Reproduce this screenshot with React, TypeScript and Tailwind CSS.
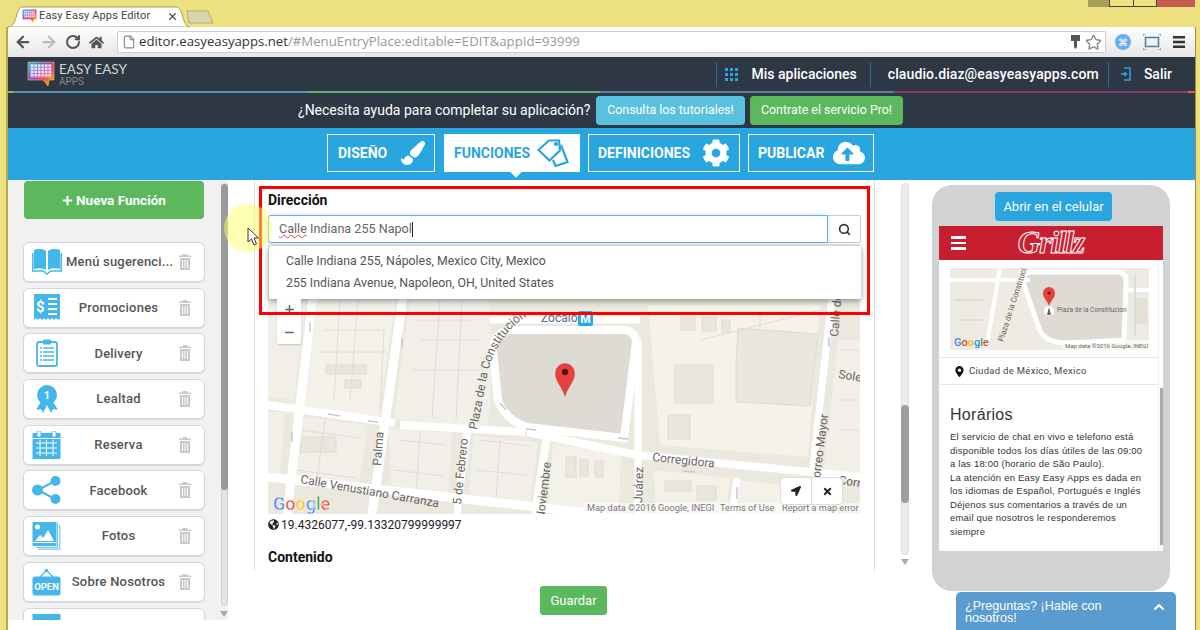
import { ArrowLeft, ArrowRight, RotateCw, File, Star, Search, X, ChevronUp, Plus, Minus } from "lucide-react";
import { FaHome, FaGlobeAmericas, FaMapMarkerAlt, FaCog, FaCloudUploadAlt, FaPaintBrush, FaLocationArrow, FaTimes, FaPlus } from "react-icons/fa";

const BLUE = "#45b6ea";

function BookIcon() {
  return (
    <svg width="30" height="28" viewBox="0 0 30 28">
      <path d="M2 2c4-1.500 9-1.500 12 1v19c-3-2-8-2-12-1z" fill={BLUE} />
      <path d="M16 3c3-2.500 8-2.500 12-1v19c-4-1-9-1-12 1z" fill={BLUE} />
      <path d="M0.800 5v18h10.500l3.700 3 3.700-3h10.500V5" fill="none" stroke={BLUE} strokeWidth="1.500" />
    </svg>
  );
}

function ReceiptIcon() {
  return (
    <svg width="28" height="27" viewBox="0 0 28 27">
      <path d="M1 0h26v24l-2 2-2-2-2 2-2-2-2 2-2-2-2 2-2-2-2 2-2-2-2 2-2-2-2 2z" fill={BLUE} />
      <path d="M15 5h9M15 10h9M15 15h9M15 20h9" stroke="#fff" strokeWidth="1.800" />
      <text x="3" y="18" fontFamily="Roboto, sans-serif" fontWeight="700" fontSize="15" fill="#fff">$</text>
    </svg>
  );
}

function ClipboardIcon() {
  return (
    <svg width="22" height="28" viewBox="0 0 22 28">
      <rect x="1" y="3" width="20" height="24" rx="2" fill="none" stroke={BLUE} strokeWidth="1.800" />
      <rect x="7" y="0.500" width="8" height="5" rx="1" fill={BLUE} />
      <path d="M4 9h14M4 13h14M4 17h14M4 21h14" stroke={BLUE} strokeWidth="1.500" strokeDasharray="2 1 11" />
    </svg>
  );
}

function MedalIcon() {
  return (
    <svg width="24" height="28" viewBox="0 0 24 28">
      <path d="M7 15L1 25l5-1 2 4 4-8 4 8 2-4 5 1-6-10z" fill={BLUE} />
      <circle cx="12" cy="10" r="10" fill={BLUE} />
      <text x="12" y="14" textAnchor="middle" fontFamily="Roboto, sans-serif" fontWeight="700" fontSize="11" fill="#fff">1</text>
    </svg>
  );
}

function CalendarIcon() {
  return (
    <svg width="29" height="28" viewBox="0 0 29 28">
      <rect x="0.500" y="2" width="28" height="26" rx="1" fill={BLUE} />
      <rect x="5" y="0" width="4" height="6" rx="1.500" fill="#fff" stroke={BLUE} />
      <rect x="20" y="0" width="4" height="6" rx="1.500" fill="#fff" stroke={BLUE} />
      <path d="M0.500 7.500h28M4 12h21M4 17h21M4 22h21M8 9v16M14.500 9v16M21 9v16" stroke="#fff" strokeWidth="1" />
    </svg>
  );
}

function ShareIcon() {
  return (
    <svg width="29" height="28" viewBox="0 0 29 28">
      <path d="M6 14L23 5M6 14l17 9" stroke={BLUE} strokeWidth="2" />
      <circle cx="5.500" cy="14" r="5.500" fill={BLUE} />
      <circle cx="23.500" cy="5" r="5" fill={BLUE} />
      <circle cx="23.500" cy="23" r="5" fill={BLUE} />
    </svg>
  );
}

function PhotosIcon() {
  return (
    <svg width="29" height="28" viewBox="0 0 29 28">
      <path d="M27 3h1.500v25H6v-1.500h21z" fill={BLUE} opacity=".6" />
      <path d="M25 1h1v25H4v-1h21z" fill={BLUE} opacity=".8" />
      <rect x="0.500" y="0" width="24" height="24" fill={BLUE} />
      <circle cx="5.500" cy="5" r="2.500" fill="#fff" />
      <path d="M3 19l5-6 3 3 5-8 6 11z" fill="#fff" />
      <rect x="0.500" y="20" width="24" height="1" fill="#fff" />
    </svg>
  );
}

function OpenIcon() {
  return (
    <svg width="29" height="28" viewBox="0 0 29 28">
      <path d="M8 9l6.500-6.500L21 9" fill="none" stroke={BLUE} strokeWidth="1.300" />
      <circle cx="14.500" cy="2.500" r="1.800" fill={BLUE} />
      <rect x="0.500" y="8.500" width="28" height="19" rx="2.500" fill={BLUE} />
      <text x="14.500" y="22" textAnchor="middle" fontFamily="Roboto, sans-serif" fontWeight="700" fontSize="9.500" fill="#fff">OPEN</text>
    </svg>
  );
}

function BlankIcon() {
  return (
    <svg width="29" height="28" viewBox="0 0 29 28">
      <rect x="0.500" y="0" width="28" height="26" fill={BLUE} />
    </svg>
  );
}

const funciones = [
  { title: "Menú sugerenci...", icon: <BookIcon /> },
  { title: "Promociones", icon: <ReceiptIcon /> },
  { title: "Delivery", icon: <ClipboardIcon /> },
  { title: "Lealtad", icon: <MedalIcon /> },
  { title: "Reserva", icon: <CalendarIcon /> },
  { title: "Facebook", icon: <ShareIcon /> },
  { title: "Fotos", icon: <PhotosIcon /> },
  { title: "Sobre Nosotros", icon: <OpenIcon /> },
  { title: "", icon: <BlankIcon /> },
];

function TagsIcon() {
  return (
    <svg width="32" height="28" viewBox="0 0 32 28" fill="none" stroke="#29a5e0" strokeWidth="2.200">
      <path d="M1.500 11L12 1.500h10l1 10L12.500 21.500z" />
      <circle cx="19" cy="5" r="1" fill="#29a5e0" />
      <path d="M24 6l6.500 17-12 4-2.500-6" />
    </svg>
  );
}

function Logo({ w, h }: { w: number; h: number }) {
  return (
    <svg width={w} height={h} viewBox="0 0 28 26">
      <defs>
        <linearGradient id="logo-grad" x1="0" y1="0" x2="1" y2="1">
          <stop offset="0" stopColor="#27c4e8" />
          <stop offset=".35" stopColor="#7a5ccf" />
          <stop offset=".6" stopColor="#e6377f" />
          <stop offset=".8" stopColor="#f08a24" />
          <stop offset="1" stopColor="#b6d334" />
        </linearGradient>
      </defs>
      <path d="M1 1h26v18h-5l-1 6-5-6H1z" fill="url(#logo-grad)" stroke="#f4c25a" strokeWidth=".6" />
      <rect x="3" y="3" width="22" height="14" fill="#fff" opacity=".25" />
      {[0, 1, 2, 3].map((r) =>
        [0, 1, 2, 3, 4, 5].map((c) => <rect key={`${r}-${c}`} x={4 + c * 3.500} y={3.500 + r * 3.200} width="2.400" height="2.200" fill="#fff" opacity=".85" />)
      )}
    </svg>
  );
}

function Trash() {
  return (
    <svg width="12" height="16" viewBox="0 0 12 16" fill="#c9c9c9">
      <path d="M4 0h4l.600 1.500H12V3H0V1.500h3.400z" />
      <path d="M1 4h10v12H1zM3 6v8h1V6zm2.500 0v8h1V6zM8 6v8h1V6z" fillRule="evenodd" />
    </svg>
  );
}

function MainMap() {
  return (
    <svg className="block" width="592" height="270" viewBox="268 244 592 270">
      <rect x="268" y="244" width="592" height="270" fill="#ebe8dd" />
      {/* manzanas */}
      <path d="M268 300h38l-12 100-26-4z" fill="#f1efe7" />
      <path d="M318 298h78l-18 122-74-11z" fill="#f3f1e8" />
      <path d="M410 298h78l4 50 -2 60-4 22-92-10z" fill="#f1efe7" />
      <path d="M268 412h17l-5 62-12-2z" fill="#f1efe7" />
      <path d="M296 416l72 9-10 65-70-12z" fill="#f1efe7" />
      <path d="M388 428l64 5-4 67-56-6z" fill="#f1efe7" />
      <path d="M474 436l64 6-8 62-62-6z" fill="#f1efe7" />
      <path d="M553 444l68 8-2 62h-72z" fill="#f3f1e8" />
      <path d="M648 305h172l-12 152-148-12z" fill="#f4f2e9" />
      <path d="M654 470l76 8-4 36h-70z" fill="#f3f1e8" />
      <path d="M740 480l66 8 30 26h-100z" fill="#f3f1e8" />
      <path d="M838 340h22v134l-36-4z" fill="#f1efe7" />
      {/* edificios */}
      <g fill="#e9e6db" stroke="#dcdbd8" strokeWidth="1">
        <rect x="326" y="365" width="40" height="9" />
        <rect x="345" y="380" width="16" height="8" />
        <rect x="300" y="437" width="36" height="15" />
        <path d="M738 328l80 6 -8 72-74-4 0-40z" />
        <rect x="675" y="365" width="38" height="38" />
        <rect x="668" y="415" width="22" height="24" />
        <rect x="566" y="457" width="10" height="20" />
        <rect x="580" y="460" width="8" height="16" />
        <rect x="595" y="461" width="8" height="16" />
        <rect x="665" y="481" width="26" height="10" />
        <rect x="697" y="486" width="19" height="14" />
        <rect x="681" y="316" width="14" height="14" />
        <rect x="702" y="317" width="14" height="14" />
        <rect x="722" y="320" width="8" height="13" />
      </g>
      <g fill="none" stroke="#dcdce0" strokeWidth="1">
        <path d="M324 330h60l-4 80M320 352h66M340 300l-6 100M358 300l-8 100M300 430l60 8M296 470l60 8M325 420l-8 60M398 440l48 5M394 470l50 6M420 434l-4 60M414 320h60M420 340h60M412 370h72M440 300l-8 118M462 300l-6 120M480 440l50 6M476 470l50 5M500 440l-4 60M700 340l120-30M760 310v20M840 350h20M840 400h20M838 430h22" />
      </g>
      {/* plaza */}
      <path d="M510 330h115q11 2 11 12l-12 96-97-11q-22-7-29-27l-5-50q1-18 17-20z" fill="#dedbd5" stroke="#fff" strokeWidth="8" />
      {/* calles */}
      <g fill="none" stroke="#fff" strokeLinecap="butt">
        <path d="M313 296L287 514" strokeWidth="9" />
        <path d="M403 296L372 514" strokeWidth="9" />
        <path d="M268 405L395 423" strokeWidth="8" />
        <path d="M400 425L525 432" strokeWidth="8" />
        <path d="M527 432L637 455L860 477" strokeWidth="8" />
        <path d="M268 477L600 514" strokeWidth="9" />
        <path d="M467 433L457 514" strokeWidth="7" />
        <path d="M547 436L535 514" strokeWidth="8" />
        <path d="M638 340L638 514" strokeWidth="7" />
        <path d="M832 296L812 476" strokeWidth="7" />
        <path d="M737 478L732 514" strokeWidth="7" />
        <path d="M490 320H640" strokeWidth="7" />
      </g>
      {/* sentido de las calles */}
      <g stroke="#c5c9dc" strokeWidth="1.500" fill="none">
        <path d="M310 322v10M340 416l-12-2M378 422l-10-1M292 442v-10M402 338v9M500 403l6 7M536 430l-10-1M695 472l-12-1M737 487v12M628 439l-10-1M829 347v-10" />
      </g>
      {/* nombres */}
      <g fontFamily="Roboto, sans-serif" fontSize="12" fill="#66635f">
        <path id="plaza-path" d="M477 430L488 372Q497 335 527 316" fill="none" />
        <text><textPath href="#plaza-path">Plaza de la Constitución</textPath></text>
        <text transform="translate(381 466) rotate(-86)">Palma</text>
        <text transform="translate(461 505) rotate(-84)">5 de Febrero</text>
        <text transform="translate(300 483) rotate(10)">Calle Venustiano Carranza</text>
        <text transform="translate(544 520) rotate(-83)">Noviembre</text>
        <text transform="translate(652 461) rotate(6)">Corregidora</text>
        <text transform="translate(642 503) rotate(-88)">Juárez</text>
        <text transform="translate(817 505) rotate(-83)">del Correo Mayor</text>
        <text transform="translate(838 337) rotate(-85)">Calle de</text>
        <text transform="translate(838 378) rotate(9)">Soled</text>
        <text transform="translate(838 484) rotate(8)">Correg</text>
        <text x="541" y="322" fill="#4c6f93">Zócalo</text>
      </g>
      <rect x="578" y="311" width="15" height="15" rx="2" fill="#27a9ee" />
      <text x="585.500" y="323" textAnchor="middle" fontFamily="Roboto, sans-serif" fontWeight="700" fontSize="12" fill="#fff">M</text>
      {/* marcador */}
      <path d="M565 396c-3-10-9.500-14-9.500-23a9.500 9.500 0 0 1 19 0c0 9-6.500 13-9.500 23z" fill="#e8403a" stroke="#b9342c" strokeWidth=".5" />
      <circle cx="565" cy="372" r="3.200" fill="#5c1410" />
      {/* logo y textos */}
      <text x="273" y="510" fontFamily="Roboto, sans-serif" fontSize="18" fontWeight="500" stroke="#fff" strokeWidth=".4">
        <tspan fill="#4285f4">G</tspan>
        <tspan fill="#ea4335">o</tspan>
        <tspan fill="#fbbc05">o</tspan>
        <tspan fill="#4285f4">g</tspan>
        <tspan fill="#34a853">l</tspan>
        <tspan fill="#ea4335">e</tspan>
      </text>
      <rect x="584" y="503" width="276" height="11" fill="#fff" opacity=".55" />
      <g fontFamily="Roboto, sans-serif" fontSize="9.200" fill="#777">
        <text x="587" y="511">Map data ©2016 Google, INEGI</text>
        <text x="720" y="511">Terms of Use</text>
        <text x="782" y="511">Report a map error</text>
      </g>
    </svg>
  );
}

function PhoneMap() {
  return (
    <svg className="block" width="199" height="82" viewBox="950 268 199 82">
      <rect x="950" y="268" width="199" height="82" fill="#eeece2" />
      <path d="M1030 272h88q9 1 8 10l-2 58-54 3q-22 1-30-12l-16-46q-2-12 6-13z" fill="#dedbd5" stroke="#fff" strokeWidth="5" />
      <path d="M1000 268l-14 82M950 280h80M1128 290h21" stroke="#fff" strokeWidth="4" fill="none" />
      <path d="M955 300h28M960 320h22M1135 275v60M1140 320h9" stroke="#dcdbd6" strokeWidth="2" fill="none" />
      <rect x="1136" y="298" width="11" height="26" fill="#e3e0d5" />
      <text transform="translate(1003 342) rotate(-72)" fontFamily="Roboto, sans-serif" fontSize="8" fill="#66635f">Plaza de la Constitución</text>
      <circle cx="1049" cy="311" r="5" fill="#fff" />
      <path d="M1049 307l2 8h-4z" fill="#7a5a50" />
      <path d="M1049 306c-2-6-6-8-6-13a6 6 0 0 1 12 0c0 5-4 7-6 13z" fill="#e8403a" />
      <circle cx="1049" cy="293" r="1.500" fill="#5c1410" />
      <text x="1057" y="312" fontFamily="Roboto, sans-serif" fontSize="6.500" fill="#66635f">Plaza de la Constitucion</text>
      <text x="954" y="346" fontFamily="Roboto, sans-serif" fontSize="11" fontWeight="500">
        <tspan fill="#4285f4">G</tspan>
        <tspan fill="#ea4335">o</tspan>
        <tspan fill="#fbbc05">o</tspan>
        <tspan fill="#4285f4">g</tspan>
        <tspan fill="#34a853">l</tspan>
        <tspan fill="#ea4335">e</tspan>
      </text>
      <rect x="1063" y="340" width="86" height="10" fill="#fff" opacity=".6" />
      <text x="1065" y="348" fontFamily="Roboto, sans-serif" fontSize="6" fill="#666">Map data ©2016 Google, INEGI</text>
    </svg>
  );
}

export default function App() {
  return (
    <div className="relative w-[1200px] h-[630px] overflow-hidden bg-[#ece07f] pl-[8px] pr-[5px] font-['Roboto',sans-serif]">
      {/* Browser tabs */}
      <div className="relative h-[27px]">
        <svg className="absolute left-[-8px] top-0" width="230" height="27" viewBox="0 0 230 27">
          <path d="M8 27c4 0 7-4 9-13 2-6 3-7 7-7h151c4 0 5 2 7 7 2 8 4 13 8 13z" fill="#fff" stroke="#a89f5a" />
          <path d="M187 11h21l5 12h-24z" fill="#d8d5b0" stroke="#b5ad75" />
        </svg>
        <div className="absolute left-[14px] top-[9px] flex items-center w-[156px]">
          <Logo w={15} h={14} />
          <span className="ml-[2px] text-[11px] leading-[14px] tracking-[0.150px] text-[#444]">Easy Easy Apps Editor</span>
          <X className="ml-auto text-[#555]" size={11} strokeWidth={3} />
        </div>
        <div className="absolute right-[86px] top-0 w-[21px] h-[7px] bg-[#a89f5a]" />
        <div className="absolute right-0 top-0 flex h-[7px]">
          <div className="w-[25px] border-x border-b border-[#444] bg-[#ece07f]" />
          <div className="w-[23px] border-r border-b border-[#444] bg-[#ece07f]" />
          <div className="w-[38px] bg-[#c75b50]" />
        </div>
      </div>

      {/* Browser toolbar */}
      <div className="flex items-center h-[30px] rounded-t-[3px] bg-gradient-to-b from-white to-[#e6e6e6] text-[#555]">
        <div className="flex items-center gap-[7.500px] w-[109px] shrink-0 pl-[6px]">
          <ArrowLeft size={18} strokeWidth={3} />
          <ArrowRight size={18} strokeWidth={3} className="text-[#bbb]" />
          <RotateCw size={16} strokeWidth={3} />
          <FaHome size={15} />
        </div>
        <div className="flex items-center h-[22px] w-[989px] shrink-0 border border-[#ccc] rounded-[2px] bg-white">
          <File size={14} className="ml-[4px] text-[#888]" />
          <span className="ml-[3px] text-[13.200px] font-['Open_Sans',sans-serif] text-[#999] whitespace-nowrap">
            <span className="text-[#333]">editor.easyeasyapps.net</span>/#MenuEntryPlace:editable=EDIT&amp;appId=93999
          </span>
          <svg className="ml-auto" width="9" height="14" viewBox="0 0 9 14" fill="#555">
            <path d="M0 0h9v6H6v6l-1.500 2L3 12V6H0z" />
          </svg>
          <Star size={17} className="ml-[5px] mr-[3px] text-[#888]" />
        </div>
        <div className="ml-[9px] w-[16px] h-[16px] shrink-0 rounded-full bg-[#6aaef0] flex items-center justify-center text-white text-[10px]">⌘</div>
        <svg className="ml-[12px] shrink-0" width="18" height="16" viewBox="0 0 18 16" fill="none">
          <rect x="2.500" y="3.500" width="13" height="9" stroke="#4a7fa8" strokeWidth="1.500" />
          <path d="M0 2V0h3M15 0h3v2M0 14v2h3M15 16h3v-2" stroke="#4a7fa8" />
        </svg>
        <svg className="ml-[12px] shrink-0" width="12" height="12" viewBox="0 0 12 12" fill="#333">
          <path d="M0 0h12v2.500H0zM0 4.750h12v2.500H0zM0 9.500h12V12H0z" />
        </svg>
      </div>

      {/* App header */}
      <div className="flex items-center h-[34px] bg-[#2d3844] text-white">
        <div className="ml-[19px]">
          <Logo w={28} h={26} />
        </div>
        <div className="ml-[4px] flex flex-col">
          <span className="text-[13.500px] leading-[15px] text-[#d5d5d5] font-['Lato',sans-serif]">EASY EASY</span>
          <span className="text-[10px] leading-[10px] text-[#888]">APPS</span>
        </div>
        <div className="ml-auto flex items-center h-[25px] border-l border-[#2b6f94] pl-[8px]">
          <div className="grid grid-cols-3 gap-[2px]">
            {[0, 1, 2, 3, 4, 5, 6, 7, 8].map((i) => <div key={i} className="w-[3px] h-[3px] bg-[#29a5e0]" />)}
          </div>
          <span className="ml-[14px] text-[14px] font-medium">Mis aplicaciones</span>
        </div>
        <div className="ml-[13px] flex items-center h-[25px] border-l border-[#2b6f94] pl-[17px] text-[14px] font-medium tracking-[0.110px]">
          claudio.diaz@easyeasyapps.com
        </div>
        <div className="ml-[9px] flex items-center h-[25px] border-l border-[#2b6f94] pl-[12px] pr-[23px]">
          <svg width="10" height="14" viewBox="0 0 10 14" fill="none" stroke="#29a5e0" strokeWidth="1.500">
            <path d="M3 1h6v12H3M0 7h5M3.500 5l2 2-2 2" />
          </svg>
          <span className="ml-[13px] text-[14px] font-medium">Salir</span>
        </div>
      </div>
      <div className="flex h-[2px] bg-[#2d3844]">
        <div className="w-[5px] bg-[#a6ad4a]" />
        <div className="w-[294px] bg-[#4f93b8]" />
        <div className="w-[293px] bg-[#5fb36a]" />
        <div className="w-[294px] bg-[#5a7f99]" />
        <div className="w-[294px] bg-[#8a3a70]" />
        <div className="flex-1 bg-[#d9663a]" />
      </div>

      {/* Help bar */}
      <div className="flex items-center h-[35px] pl-[290px] bg-[#2d3844] text-white">
        <span className="w-[294px] text-[14px] whitespace-nowrap">¿Necesita ayuda para completar su aplicación?</span>
        <div className="ml-[4px] flex items-center justify-center w-[149px] h-[29px] rounded-[4px] bg-[#5bc0de] text-[12.400px]">Consulta los tutoriales!</div>
        <div className="ml-[5px] flex items-center justify-center w-[153px] h-[29px] rounded-[4px] bg-[#5cb85c] text-[12.400px]">Contrate el servicio Pro!</div>
      </div>

      {/* Main nav */}
      <div className="flex justify-start gap-[8px] h-[52px] pt-[6px] pl-[319px] bg-[#29a5e0] text-white text-[14px] font-bold">
        <div className="flex items-center w-[108px] h-[38px] border border-white pl-[10px] mr-px">
          DISEÑO
          <FaPaintBrush size={24} className="ml-auto mr-[9px]" />
        </div>
        <div className="relative flex items-center w-[136px] h-[38px] bg-white pl-[10px] text-[#29a5e0]">
          FUNCIONES
          <div className="ml-[7px]">
            <TagsIcon />
          </div>
          <div className="absolute left-[68px] top-[38px] w-[8px] h-[8px] -mt-[4px] rotate-45 bg-white" />
        </div>
        <div className="flex items-center w-[152px] h-[38px] border border-white pl-[9px]">
          DEFINICIONES
          <FaCog size={28} className="ml-auto mr-[9px]" />
        </div>
        <div className="flex items-center w-[126px] h-[38px] border border-white pl-[9px]">
          PUBLICAR
          <FaCloudUploadAlt size={32} className="ml-auto mr-[8px]" />
        </div>
      </div>

      {/* Body */}
      <div className="flex h-[450px] bg-white">
        {/* Functions list */}
        <div className="relative w-[220px] h-[440px] overflow-hidden bg-[#f1f1f1] pl-[16px] pt-[1px]">
          <div className="flex items-center justify-center w-[180px] h-[38px] rounded-[4px] bg-[#5cb85c] text-white text-[13.500px] font-bold">
            <FaPlus size={11} className="mr-[3px]" />
            Nueva Función
          </div>
          <div className="mt-[23px] flex flex-col gap-[5.700px]">
            {funciones.map((f, i) => (
              <div key={i} className="flex items-center shrink-0 w-[182px] h-[40px] -ml-[1px] border border-[#d2d7de] rounded-[6px] bg-white shadow-[0_1px_1px_#d5d8dd]">
                <div className="flex justify-center w-[42px] shrink-0 pl-[3px]">{f.icon}</div>
                <span className="w-[105px] text-center text-[13px] font-medium tracking-[0.200px] text-[#555] whitespace-nowrap">{f.title}</span>
                <div className="ml-[8px]">
                  <Trash />
                </div>
              </div>
            ))}
          </div>
          <div className="absolute right-0 top-[3px] w-[7px] h-[423px] rounded-full bg-[#e4e4e4] border border-[#d0d0d0]">
            <div className="w-full h-[306px] -mx-[1px] box-content border-x border-transparent rounded-full bg-[#9a9a9a]" />
          </div>
          <div className="absolute right-0 top-[431px] w-0 h-0 border-x-[4px] border-t-[6px] border-x-transparent border-t-[#aaa]" />
        </div>

        {/* Form panel */}
        <div className="ml-[26px] w-[621px] shrink-0">
          <div className="relative h-[390px] overflow-hidden border-x border-[#ddd] px-[13px]">
            <div className="pt-[12px] text-[14px] leading-[16px] font-bold text-[#111]">Dirección</div>
            <div className="mt-[7px] flex h-[28px]">
              <div className="flex items-center w-[560px] border border-[#66afe9] rounded-l-[3px] bg-white pl-[10px] text-[12.600px] text-[#666] shadow-[0_0_4px_#bfe0f5]">
                <span className="underline decoration-wavy decoration-[#e04040] decoration-[1px]">Calle</span>
                <span>&nbsp;Indiana 255 Napol</span>
                <span className="w-px h-[15px] bg-[#222]" />
              </div>
              <div className="flex items-center justify-center w-[33px] border border-l-0 border-[#ccc] rounded-r-[3px]">
                <Search size={13} strokeWidth={3} className="text-[#333]" />
              </div>
            </div>
            <div className="relative mt-px">
              <MainMap />
              <div className="absolute left-[1px] top-[2px] w-[592px] h-[53px] pt-[4px] rounded-[2px] bg-white text-[12.350px] leading-[22px] text-[#555] shadow-[0_2px_6px_rgba(0,0,0,0.4)]">
                <div className="pl-[17px]">Calle Indiana 255, Nápoles, Mexico City, Mexico</div>
                <div className="pl-[17px]">255 Indiana Avenue, Napoleon, OH, United States</div>
              </div>
              <div className="absolute left-[9px] top-[54px] w-[24px] h-[46px] flex flex-col items-center justify-around rounded-[2px] bg-white text-[#666] shadow-[0_1px_2px_rgba(0,0,0,0.2)]">
                <Plus size={13} strokeWidth={3} />
                <Minus size={13} strokeWidth={3} />
              </div>
              <div className="absolute left-[512px] top-[233px] flex h-[28px] rounded-[4px] border border-[#ddd] bg-white text-[#222]">
                <div className="flex items-center justify-center w-[31px] border-r border-[#ddd]">
                  <FaLocationArrow size={10} />
                </div>
                <div className="flex items-center justify-center w-[30px]">
                  <FaTimes size={11} />
                </div>
              </div>
            </div>
            <div className="flex items-center mt-[2px] h-[17px] text-[12px] text-[#222]">
              <FaGlobeAmericas size={11} className="mr-[2px]" />
              19.4326077,-99.13320799999997
            </div>
            <div className="mt-[16px] text-[14px] leading-[16px] font-bold text-[#111]">Contenido</div>
          </div>
          <div className="mt-[16px] ml-[286px] flex items-center justify-center w-[67px] h-[29px] rounded-[3px] bg-[#5cb85c] text-white text-[13px]">Guardar</div>
        </div>

        {/* Form scrollbar */}
        <div className="ml-[26px] w-[8px] shrink-0 pt-[3px]">
          <div className="h-[372px] pt-[221px] rounded-full bg-[#ececec] border border-[#ddd]">
            <div className="-mx-px h-[98px] rounded-full bg-[#9e9e9e]" />
          </div>
          <div className="mt-[4px] w-0 h-0 border-x-[4px] border-t-[6px] border-x-transparent border-t-[#aaa]" />
        </div>

        {/* Phone preview */}
        <div className="ml-[23px] w-[238px] h-[406px] mt-[5px] shrink-0 rounded-[20px] bg-[#d0d2d4] px-[7px] pt-[7px]">
          <div className="flex justify-start pl-[56px]">
            <div className="flex items-center justify-center w-[117px] h-[29px] rounded-[4px] bg-[#29a5e0] text-white text-[13px]">Abrir en el celular</div>
          </div>
          <div className="mt-[5px] h-[325px] bg-white overflow-hidden">
            <div className="relative flex items-center justify-center h-[34px] bg-[#c71f30] text-white">
              <div className="absolute left-[12px] flex flex-col gap-[3px]">
                <div className="w-[15px] h-[2.500px] bg-white" />
                <div className="w-[15px] h-[2.500px] bg-white" />
                <div className="w-[15px] h-[2.500px] bg-white" />
              </div>
              <span className="text-[31px] leading-[30px] italic font-bold tracking-[-1px] font-['Liberation_Serif',serif] text-[#c71f30] [-webkit-text-stroke:1px_#fff]">Grillz</span>
            </div>
            <div className="relative w-[220px] h-[291px] border-r border-[#eee]">
              <div className="pl-[11px] pt-[8px]">
                <PhoneMap />
              </div>
              <div className="mt-[7px] flex items-center h-[28px] border-y border-[#e6e6e6] pl-[15px] text-[9.500px] tracking-[0.300px] text-[#444] pt-[1px]">
                <FaMapMarkerAlt size={11} className="mr-[4px] text-[#111]" />
                Ciudad de México, Mexico
              </div>
              <div className="pl-[11px] pt-[19px] font-['Liberation_Sans',sans-serif]">
                <div className="text-[16px] leading-[22px] tracking-[0.300px] text-[#333]">Horários</div>
                <p className="mt-[4px] w-[200px] text-[9.500px] leading-[13.500px] tracking-[0.200px] text-[#333]">
                  El servicio de chat en vivo e telefono está disponible todos los días útiles de las 09:00 a las 18:00 (horario de São Paulo).
                  <br />
                  La atención en Easy Easy Apps es dada en los idiomas de Español, Portugués e Inglés
                  <br />
                  Déjenos sus comentarios a través de un email que nosotros le responderemos siempre
                </p>
              </div>
              <div className="absolute left-[221px] top-[128px] w-[3px] h-[157px] bg-[#aaa]" />
            </div>
          </div>
        </div>
      </div>

      {/* Window frame edges */}
      <div className="absolute left-[6px] top-[27px] w-[2px] h-[603px] bg-[#b5a94f]" />
      <div className="absolute left-[1195px] top-[27px] w-[1px] h-[603px] bg-[#9c9048]" />

      {/* Red highlight */}
      <div className="absolute left-[259px] top-[186px] w-[611px] h-[129px] border-[3px] border-[#f00] pointer-events-none" />

      {/* Mouse highlight */}
      <div className="absolute left-[224px] top-[204px] w-[48px] h-[48px] rounded-full bg-[#ffff66] opacity-50 pointer-events-none" />
      <svg className="absolute left-[247px] top-[227px]" width="13" height="19" viewBox="0 0 13 19">
        <path d="M1 1v14l3.500-3 2.500 6 2.500-1-2.500-6h4.500z" fill="#fff" stroke="#333" />
      </svg>

      {/* Chat */}
      <div className="absolute left-[956px] top-[592px] flex w-[220px] h-[38px] rounded-t-[5px] bg-[#5a9bd0] pl-[9px] pt-[8px] text-white text-[12.600px] leading-[12px] font-['Liberation_Sans',sans-serif]">
        <span className="w-[150px]">¿Preguntas? ¡Hable con nosotros!</span>
        <ChevronUp size={16} strokeWidth={3} className="absolute right-[9px] top-[7px]" />
      </div>
    </div>
  );
}
